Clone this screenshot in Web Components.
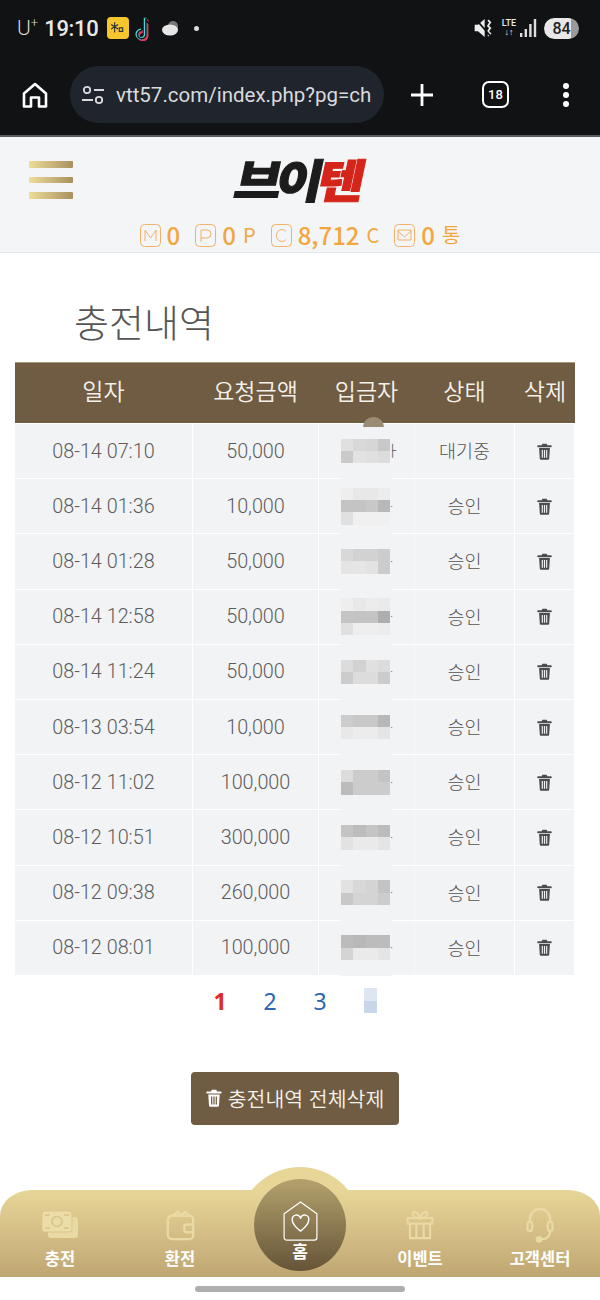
<!DOCTYPE html>
<html lang="ko"><head><meta charset="utf-8"><title>충전내역</title>
<style>
html,body{margin:0;padding:0;background:#fff}
body{width:600px;height:1300px;overflow:hidden;display:flex;flex-direction:column;font-family:"Noto Sans CJK KR","Noto Sans",sans-serif}
</style></head><body>
<x-status-bar></x-status-bar>
<x-browser-bar url="vtt57.com/index.php?pg=ch"></x-browser-bar>
<x-site-header></x-site-header>
<x-page-title>충전내역</x-page-title>
<x-history-table></x-history-table>
<x-pager></x-pager>
<x-delete-all>충전내역 전체삭제</x-delete-all>
<x-bottom-nav></x-bottom-nav>
<x-gesture-bar></x-gesture-bar>
<script>
const TRASH=(c)=>`<svg viewBox="0 0 14 16" width="14" height="16" fill="${c}"><path d="M5 0.6h4l.7 1.6H13a.8.8 0 0 1 0 1.7H1a.8.8 0 0 1 0-1.7h3.3zM1.9 4.8h10.2l-.7 10a1 1 0 0 1-1 .9H3.6a1 1 0 0 1-1-.9zM4.400 6.600v7.200h1.100V6.600zM6.450 6.600v7.200h1.100V6.600zM8.500 6.600v7.200h1.100V6.600z" fill-rule="evenodd"/></svg>`;
function def(name,html,init){customElements.define(name,class extends HTMLElement{constructor(){super();this.attachShadow({mode:'open'});}connectedCallback(){if(this._d)return;this._d=1;this.shadowRoot.innerHTML=typeof html==='function'?html(this):html;init&&init(this)}})}

def('x-status-bar',`<style>
:host{display:flex;align-items:center;height:47px;padding:9px 0 0 17px;box-sizing:border-box;background:#111214;color:#e9e9ea;font-family:Roboto,"Noto Sans",sans-serif;flex:none}
.u{font-size:21px;font-weight:300;color:#d8d8d8;display:flex}.u sup{font-size:13px;line-height:13px;margin-top:0}
.t{font-size:22px;font-weight:500;margin-left:6px;letter-spacing:-.3px}
.ic{display:flex;align-items:center;margin-left:8px;gap:6px}
.y{width:22px;height:22px;border-radius:4px;background:#f6c62e;display:flex;align-items:center;justify-content:center}
.dot{width:5px;height:5px;border-radius:50%;background:#ddd;margin-left:13px}
.r{margin-left:auto;display:flex;align-items:center;padding-right:21px}
.b{width:35px;height:21px;border-radius:11px;background:linear-gradient(90deg,#e8e8e8 78%,#9a9a9a 78%);color:#222;font-size:16px;font-weight:500;text-align:center;line-height:21px;margin-left:7px}
.lte{font-size:9px;line-height:9px;width:18px;text-align:center;margin-left:7px;font-weight:500}
</style>
<span class="u">U<sup>+</sup></span><span class="t">19:10</span>
<span class="ic"><span class="y"><svg width="15" height="15" viewBox="0 0 13 13" stroke="#333" stroke-width="1" fill="none"><path d="M4 1v9M1 3l6 4M7 3L1 7M8 6h3v3H8z"/></svg></span>
<svg width="20" height="25" viewBox="1.500 0 15.500 21.500"><path d="M10 2v14a3.600 3.600 0 1 1-3.600-3.600" fill="none" stroke="#e9365a" stroke-width="2.400" transform="translate(1 1)"/><path d="M10 2v14a3.600 3.600 0 1 1-3.600-3.600" fill="none" stroke="#3fd8de" stroke-width="2.400" transform="translate(-.6 -.4)"/><path d="M10 2v14a3.600 3.600 0 1 1-3.600-3.600M10 2c.4 3 2.400 5 5.500 5.200" fill="none" stroke="#111" stroke-width="1.300"/></svg>
<svg width="20" height="16" viewBox="0 0 20 16"><circle cx="12" cy="6" r="5" fill="#777"/><ellipse cx="9" cy="10" rx="8" ry="5.500" fill="#e6e6e6"/></svg></span>
<span class="dot"></span>
<span class="r"><svg width="20" height="20" viewBox="0 0 17 18" fill="#eee"><path d="M1 6h3l6-5v16l-6-5H1z"/><path d="M13 2l2 2-2 3 2 2-2 3 2 2-2 2" fill="none" stroke="#eee" stroke-width="1.600"/><path d="M2 1l13 15" stroke="#111" stroke-width="1.600"/></svg>
<span class="lte">LTE<br>↓↑</span>
<svg width="17" height="20" viewBox="0 0 17 20" fill="#ddd" style="margin-left:2px"><rect x="0" y="15" width="2.400" height="4"/><rect x="4.600" y="11" width="2.400" height="8"/><rect x="9.200" y="6" width="2.400" height="13"/><rect x="13.800" y="1" width="2.400" height="18"/></svg>
<span class="b">84</span></span>`);

def('x-browser-bar',el=>`<style>
:host{display:flex;align-items:center;height:90px;padding-top:7px;box-sizing:border-box;background:#111214;color:#fff;flex:none;border-bottom:2px solid #5a5c64;font-family:Roboto,"Noto Sans",sans-serif}
.home{margin-left:22px;width:26px;height:26px}
.pill{margin-left:22px;width:314px;height:57px;border-radius:29px;background:#20242c;display:flex;align-items:center;padding-left:11px;box-sizing:border-box;color:#d9dade}
.url{font-size:20.5px;margin-left:11px;white-space:nowrap}
.plus{margin-left:26px;width:24px;height:24px}.tab{margin-left:48px;width:27px;height:27px;border:2.6px solid #fff;border-radius:7px;box-sizing:border-box;font-size:13px;font-weight:500;display:flex;align-items:center;justify-content:center}
.more{margin-left:54px;width:6px;display:flex;flex-direction:column;gap:3px}.more i{width:6px;height:6px;border-radius:50%;background:#fff;display:block}
</style>
<svg class="home" viewBox="0 0 26 26" fill="none" stroke="#fff" stroke-width="2.600" stroke-linejoin="round"><path d="M2 11.500 13 2l11 9.500V24.500h-7v-9H9v9H2z"/></svg>
<div class="pill"><svg width="24" height="22" viewBox="0 0 24 22" fill="none" stroke="#d9dade" stroke-width="1.800"><circle cx="6" cy="6" r="3.200"/><path d="M13 6h10M1 16h11"/><circle cx="18" cy="16" r="3.200"/></svg><span class="url">${el.getAttribute('url')}</span></div>
<svg class="plus" viewBox="0 0 24 24" stroke="#fff" stroke-width="2.800"><path d="M12 1v22M1 12h22"/></svg>
<span class="tab">18</span><span class="more"><i></i><i></i><i></i></span>`);

def('x-coin',el=>`<style>
:host{display:flex;align-items:center;color:#f3a63b;font-size:24px;font-weight:500;line-height:1}
svg{margin-right:6px}.u{font-size:20px;margin-left:7px;font-weight:400}
</style><svg width="21" height="23" viewBox="0 0 21 23" fill="none" stroke="#f3b169" stroke-width="1"><rect x=".5" y=".5" width="20" height="22" rx="4"/>${{M:'<path d="M5 17V6l5.500 8L16 6v11"/>',P:'<path d="M6 18V6h6a3.500 3.500 0 0 1 0 8H6"/>',C:'<path d="M15 7.500A5.500 6 0 1 0 15 15.500"/>',E:'<path d="M4 7l6.500 6L17 7M4 6h13v10H4z"/>'}[el.getAttribute('k')]}</svg><span><slot></slot></span>${el.getAttribute('u')?`<span class="u">${el.getAttribute('u')}</span>`:''}`);

def('x-site-header',`<style>
:host{display:block;height:116px;background:#f3f5f7;border-bottom:1px solid #e6e7ea;box-sizing:border-box;flex:none}
.top{height:74px;display:grid;grid-template-columns:1fr auto 1fr;align-items:center;padding-top:8px;box-sizing:border-box}
.burger{margin-left:29px;width:44px;display:flex;flex-direction:column;gap:9px;margin-top:4px}
.burger i{display:block;height:6.5px;border-radius:1px;background:linear-gradient(90deg,#eedc9a,#a8915f)}
.logo{font-size:51px;font-weight:900;letter-spacing:-5.5px;transform:skewX(-12deg) scaleY(.9);line-height:1;color:#1c1c1c;padding-right:4px;white-space:nowrap;-webkit-text-stroke:1.2px #1c1c1c}
.logo b{font-weight:900;color:#d5251a;-webkit-text-stroke:1.2px #d5251a}
.coins{display:flex;justify-content:center;gap:15px;margin-top:12px;padding-left:0}
</style>
<div class="top"><div class="burger"><i></i><i></i><i></i></div><div class="logo">브이<b>텐</b></div><div></div></div>
<div class="coins"><x-coin k="M">0</x-coin><x-coin k="P" u="P">0</x-coin><x-coin k="C" u="C">8,712</x-coin><x-coin k="E" u="통">0</x-coin></div>`);

def('x-page-title',`<style>:host{display:block;flex:none;padding:41px 0 0 74px;height:109px;box-sizing:border-box;font-size:38px;font-weight:300;line-height:54px;color:#555}</style><slot></slot>`);

const mos=[
 [['e0','d8','d6','c8'],['ca','e2','e0','dc']],
 [['ee','e8','e8','ec'],['c4','c4','c8','b8'],['e0','f0','f0','f0']],
 [['d8','d2','d2','cc'],['e4','e6','e2','cc']],
 [['ee','e8','ec','ea'],['c4','c4','c4','ae'],['e0','ee','ee','ec']],
 [['dc','d2','e0','dc'],['cc','dc','dc','cc']],
 [['cc','c8','c8','b8'],['e8','ec','ec','e4']],
 [['dc','cc','cc','c4'],['bc','cc','cc','cc']],
 [['c4','bc','c4','bc'],['e2','ea','ea','e4']],
 [['e2','d8','d4','c4'],['c8','d4','d4','cc']],
 [['bc','b8','bc','bc'],['d4','ea','ea','e4']],
];
def('x-mosaic',el=>{const m=mos[+el.getAttribute('i')];return `<style>:host{display:grid;grid-template-columns:repeat(4,12.25px);grid-auto-rows:12.3px}i{display:block}</style>`+m.map(r=>r.map(c=>`<i style="background:#${c}${c}${c}"></i>`).join('')).join('')});

def('x-row',el=>`<style>
:host{display:grid;grid-template-columns:177px 125px 95px 99px 59px;column-gap:1px;height:54.2px;flex:none;font-family:Roboto,"Noto Sans CJK KR",sans-serif;font-size:18.5px;font-weight:300;color:#555}
div{background:#f2f3f5;display:flex;align-items:center;justify-content:center;white-space:nowrap;position:relative}
.n{padding-bottom:2px;box-sizing:border-box}
.d{font-size:19.8px;color:#5c5c5c}
.m{justify-content:flex-start;padding-left:22px;box-sizing:border-box}
.m::after{content:"";position:absolute;left:22px;width:50px;height:1px;bottom:-1px;background:#f2f3f5}
.m::before{content:"";position:absolute;right:-1px;width:1px;top:0;bottom:0;background:#f2f3f5;opacity:.6}
.tail{font-size:${el.getAttribute('i')==='0'?'15px':'13px'};line-height:1;margin-left:${el.getAttribute('i')==='0'?'-4px':'0'};color:#555}
svg{width:15px;height:17px}
</style><div class="d">${el.getAttribute('d')}</div><div class="d">${el.getAttribute('a')}</div><div class="m"><x-mosaic i="${el.getAttribute('i')}"></x-mosaic><span class="tail">${el.getAttribute('i')==='0'?'ㅏ':'·'}</span></div><div class="n">${el.getAttribute('s')}</div><div>${TRASH('#4c4c4c')}</div>`);

def('x-history-table',`<style>
:host{display:flex;flex-direction:column;margin:0 25px 0 15px;width:560px;gap:1px;flex:none;position:relative}
.h{display:grid;grid-template-columns:177px 125px 95px 99px 60px;column-gap:1px;height:61px;background:#6f5c42;color:#f4f1ea;font-size:23px;font-weight:350;align-items:center;text-align:center;padding-bottom:6px;box-sizing:border-box;border-top:1px solid #a8997f}
.nub{position:absolute;left:348px;top:55px;width:21px;height:10px;background:#998b74;border-radius:11px 11px 0 0;z-index:2}
</style><div class="h"><span>일자</span><span>요청금액</span><span>입금자</span><span>상태</span><span>삭제</span></div><div class="nub"></div><slot></slot>`,el=>{
 const D=[['08-14 07:10','50,000','대기중'],['08-14 01:36','10,000','승인'],['08-14 01:28','50,000','승인'],['08-14 12:58','50,000','승인'],['08-14 11:24','50,000','승인'],['08-13 03:54','10,000','승인'],['08-12 11:02','100,000','승인'],['08-12 10:51','300,000','승인'],['08-12 09:38','260,000','승인'],['08-12 08:01','100,000','승인']];
 D.forEach((r,i)=>{const x=document.createElement('x-row');x.setAttribute('d',r[0]);x.setAttribute('a',r[1]);x.setAttribute('s',r[2]);x.setAttribute('i',i);el.appendChild(x)});
});

def('x-pager',`<style>
:host{display:grid;grid-template-columns:repeat(4,50px);justify-content:center;justify-items:center;height:50px;align-items:center;font-size:23px;font-family:"Noto Sans",sans-serif;color:#2e66b0;flex:none;padding:2px 10px 0 0;box-sizing:border-box}
b{color:#e22b25}
.m{width:13px;height:25px;background:linear-gradient(#dde6f2 50%,#c8d6ea 50%);border-radius:1px}
</style><b>1</b><span>2</span><span>3</span><span class="m"></span>`);

def('x-delete-all',`<style>
:host{display:flex;align-self:flex-start;align-items:center;margin-top:47px;margin-left:191px;width:208px;height:53px;background:#6f5c42;border-radius:4px;color:#f5f2ec;font-size:20.5px;font-weight:350;flex:none;justify-content:center;gap:6px;box-sizing:border-box;white-space:nowrap}
svg{width:16px;height:18px}
</style>${TRASH('#fff')}<span><slot></slot></span>`);

const ICONS={
 '충전':`<svg width="36" height="27" viewBox="0 0 36 27" fill="none"><rect x="6" y="6" width="30" height="21" rx="3" fill="#e9d9a4"/><rect x="0" y="0" width="30" height="21" rx="3" fill="#ecdca8" stroke="#dcc78c" stroke-width="1"/><circle cx="15" cy="10.500" r="5" stroke="#d8c387" stroke-width="1.600"/><path d="M3 4h5M22 17h5M3 17h5M22 4h5" stroke="#d8c387" stroke-width="1.600"/></svg>`,
 '환전':`<svg width="31" height="33" viewBox="0 0 30 34" fill="none" stroke="#e9d9a4" stroke-width="2.400"><path d="M7 8l5-4 3 3 5-3 4 4"/><rect x="2" y="8" width="26" height="24" rx="4"/><rect x="19" y="17" width="9" height="8" rx="2"/></svg>`,
 '이벤트':`<svg width="30" height="31" viewBox="0 0 30 34" fill="none" stroke="#e9d9a4" stroke-width="2.400"><path d="M15 10c-6 0-8-2-8-5s5-3 8 5c3-8 8-8 8-5s-2 5-8 5z"/><rect x="1.500" y="10" width="27" height="6"/><path d="M4 16v16h22V16M11 16v16M19 16v16"/></svg>`,
 '고객센터':`<svg width="28" height="37" viewBox="0 0 30 40" fill="none" stroke="#e9d9a4" stroke-width="2.400"><path d="M4 18v-4a11 11 0 0 1 22 0v4"/><rect x="1.500" y="17" width="5" height="10" rx="2.500"/><rect x="23.500" y="17" width="5" height="10" rx="2.500"/><path d="M26 27c0 6-4 9-10 9"/><circle cx="14" cy="36" r="2.500" fill="#e9d9a4"/></svg>`};
def('x-nav-item',el=>`<style>
:host{display:flex;flex-direction:column;align-items:center;width:120px;color:#fff;font-size:16.5px;font-weight:700;height:87px;padding-top:17px;box-sizing:border-box;line-height:24px;flex:none}
.i{height:36px;margin-bottom:3px;display:flex;align-items:center;justify-content:center}
</style><div class="i">${ICONS[el.getAttribute('l')]}</div>${el.getAttribute('l')}`);

def('x-bottom-nav',`<style>
:host{display:block;position:relative;margin-top:65px;height:87px;flex:none;width:600px}
.bg{position:absolute;inset:0;border-radius:32px 32px 0 0/26px 26px 0 0;background:linear-gradient(#e8d698,#bfa672)}
.bump{position:absolute;left:238px;top:-23px;width:124px;height:124px;border-radius:50%;background:#e8d698;clip-path:inset(0 0 80px 0)}
.items{position:absolute;inset:0;display:grid;grid-template-columns:repeat(5,120px)}
.home{position:absolute;left:254px;top:-11px;width:92px;height:92px;border-radius:50%;background:linear-gradient(#b3a26d,#665438);color:#fff;font-size:17px;font-weight:700;display:flex;flex-direction:column;align-items:center;padding-top:22px;box-sizing:border-box;line-height:18px}
</style><div class="bump"></div><div class="bg"></div>
<div class="items"><x-nav-item l="충전"></x-nav-item><x-nav-item l="환전"></x-nav-item><span></span><x-nav-item l="이벤트"></x-nav-item><x-nav-item l="고객센터"></x-nav-item></div>
<div class="home"><svg width="41" height="41" viewBox="0 0 38 45" fill="none" stroke="#fff" stroke-width="1.300" stroke-linejoin="round"><path d="M1 14 19 1l18 13v26a3 3 0 0 1-3 3H4a3 3 0 0 1-3-3z"/><path d="M19 33c-5-4-9-8-9-12a4.600 4.600 0 0 1 9-2 4.600 4.600 0 0 1 9 2c0 4-4 8-9 12z" stroke-width="1.600"/></svg><span>홈</span></div>`);

def('x-gesture-bar',`<style>:host{display:block;flex:none;width:210px;height:6px;background:#aeaeae;border-radius:3px;margin:9px 0 0 195px}</style>`);
</script>
</body></html>
